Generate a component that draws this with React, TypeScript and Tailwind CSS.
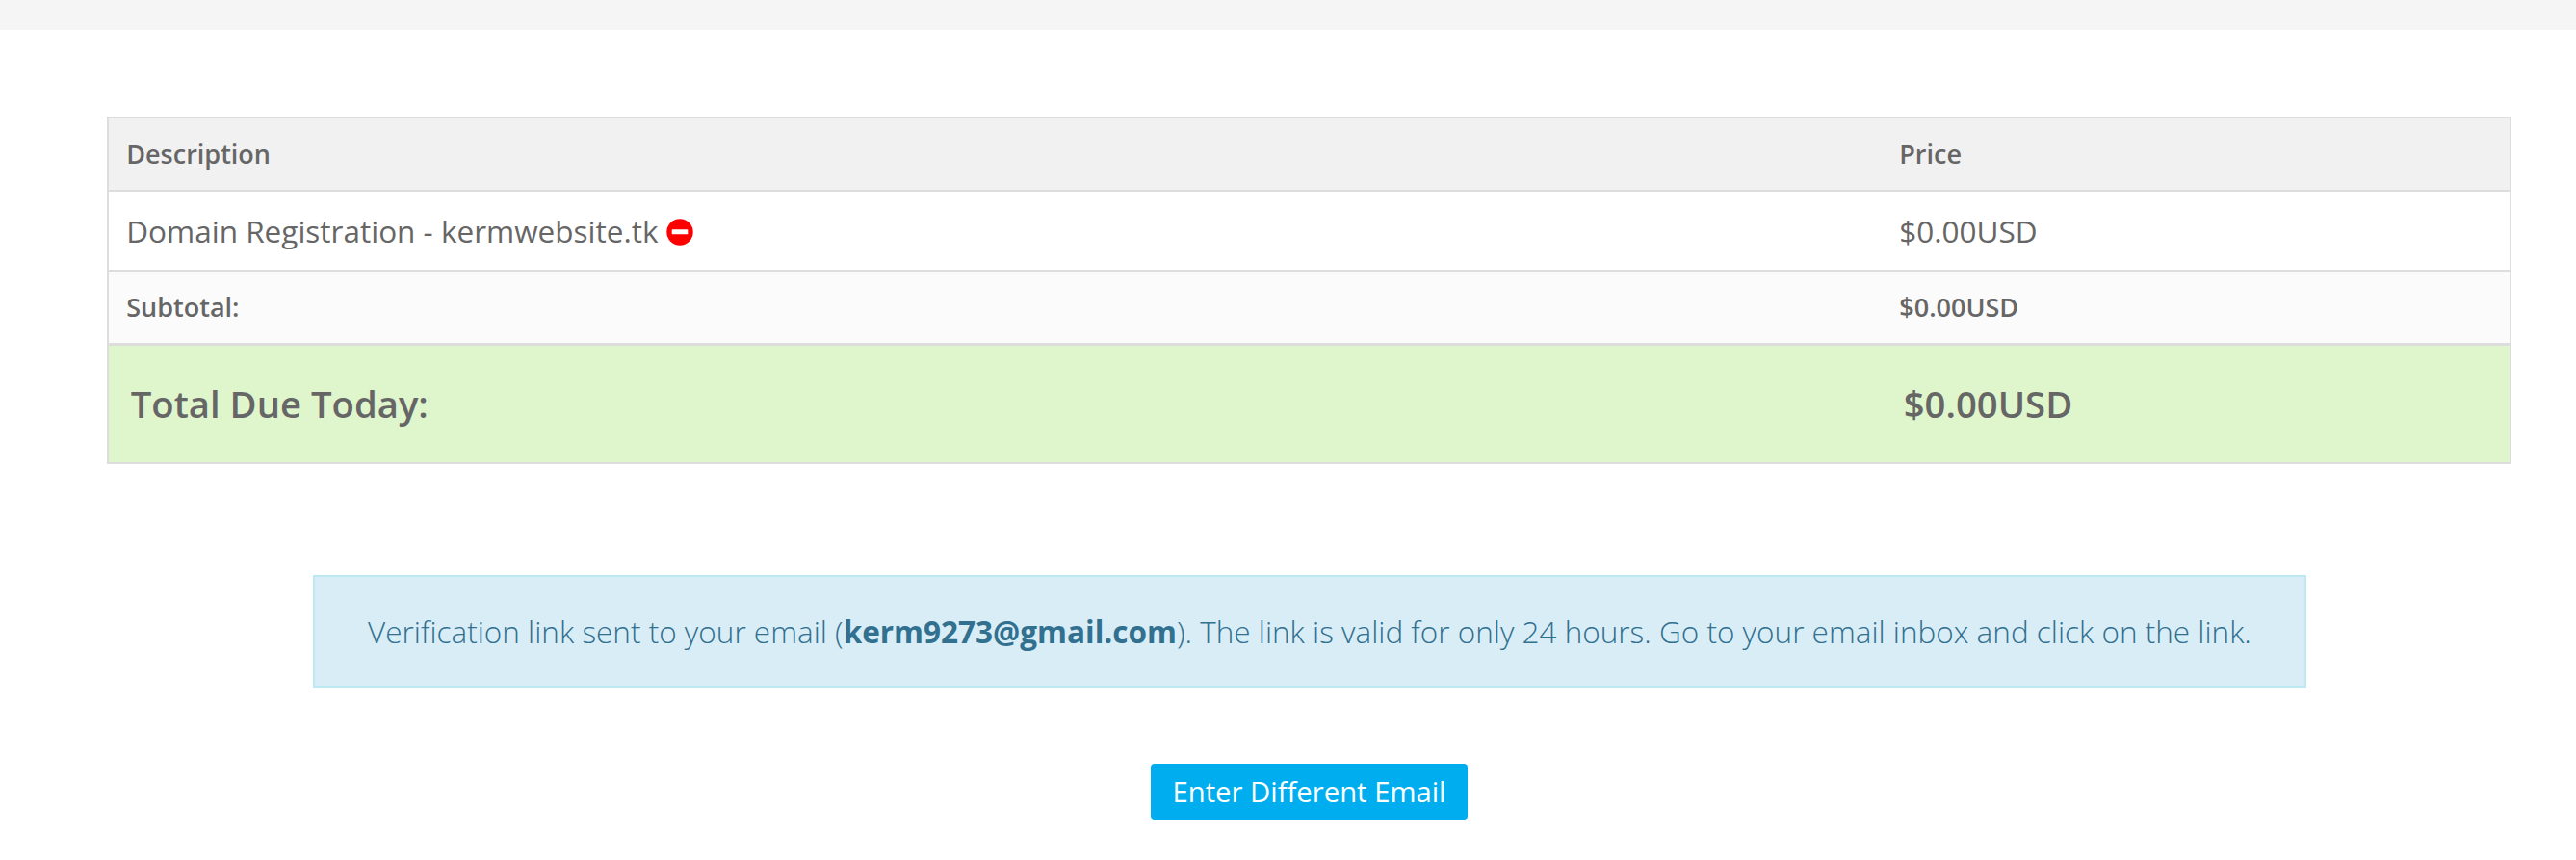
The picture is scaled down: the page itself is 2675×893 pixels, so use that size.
import React from "react";

const columns = "grid grid-cols-[1841px_1fr] items-center";

function RemoveIcon() {
  return (
    <svg viewBox="0 0 28 28" className="ml-2 mt-0.5 h-7 w-7 shrink-0" role="img" aria-label="Remove">
      <circle cx="14" cy="14" r="13.7" fill="#ff0000" />
      <rect x="5.7" y="11.3" width="16.6" height="5" rx="0.5" fill="#ffffff" />
    </svg>
  );
}

export default function App() {
  return (
    <div className="h-[893px] w-full overflow-hidden bg-white font-['Open_Sans',sans-serif] text-[#666666]">
      <div className="h-[31px] bg-[#f5f5f5]" />
      <main className="flex flex-col pt-[90px]">
        <section className="ml-[111px] w-[2497px] border-2 border-[#dddddd]">
          <div className={`${columns} h-[76px] border-b-2 border-[#dddddd] bg-[#f1f1f1] pl-[18.25px] text-[27px] font-semibold`}>
            <div>Description</div>
            <div>Price</div>
          </div>
          <div className={`${columns} h-[83px] border-b-2 border-[#dddddd] pl-[18.25px] text-[31.5px]`}>
            <div className="flex items-center">
              Domain Registration - kermwebsite.tk
              <RemoveIcon />
            </div>
            <div>$0.00USD</div>
          </div>
          <div className={`${columns} h-[77px] border-b-[3px] border-[#dddddd] bg-[#fbfbfb] pl-[18.25px] text-[27px] font-semibold`}>
            <div>Subtotal:</div>
            <div>$0.00USD</div>
          </div>
          <div className={`${columns} h-[121px] bg-[#dff6cd] pl-[22.75px] text-[38.25px] font-semibold`}>
            <div>Total Due Today:</div>
            <div>$0.00USD</div>
          </div>
        </section>
        <div className="ml-[325px] mt-[115px] flex h-[117px] w-[2070px] items-center justify-center border-2 border-[#bce8f1] bg-[#d9edf7] text-[31.5px] font-light text-[#31708f]">
          <p className="whitespace-nowrap">
            Verification link sent to your email (<strong className="font-bold">kerm9273@gmail.com</strong>). The link is valid for only 24 hours. Go to your email inbox and click on the link.
          </p>
        </div>
        <button className="ml-[1195px] mt-[79px] h-[58px] w-[329px] rounded-[4px] bg-[#00aeef] pt-0.5 text-[29.25px] text-white">
          Enter Different Email
        </button>
      </main>
    </div>
  );
}
